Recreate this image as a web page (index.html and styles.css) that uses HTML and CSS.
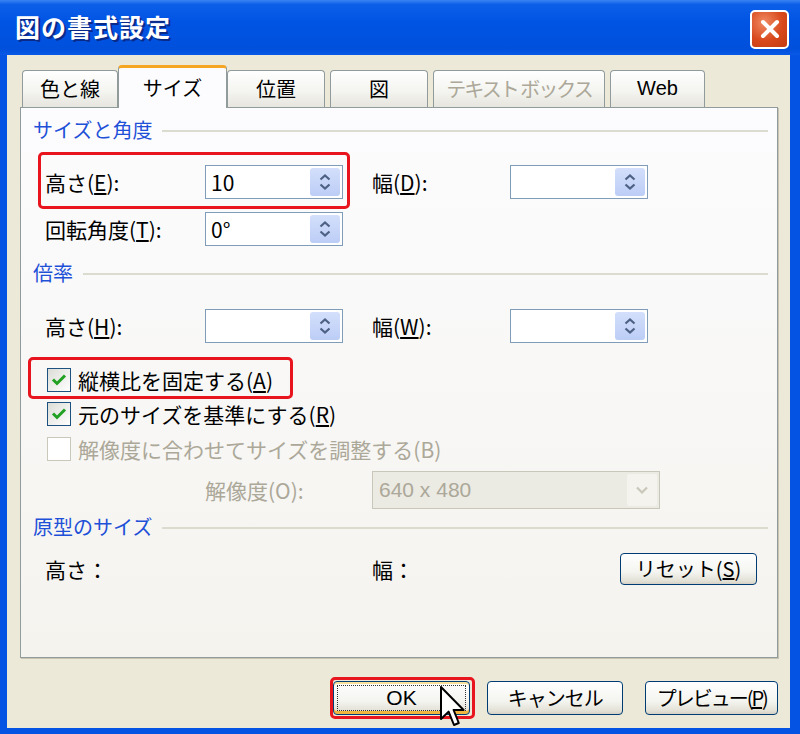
FILE: index.html
```html
<!DOCTYPE html>
<html lang="ja">
<head>
    <meta charset="UTF-8">
    <title>図の書式設定</title>
    <link rel="stylesheet" href="styles.css">
</head>
<body>
    <div class="window">
        <div class="titlebar">
            <span class="title">図の書式設定</span>
            <span class="close">
                <svg width="24" height="24" viewBox="0 0 24 24"><path d="M5 5 L19 19 M19 5 L5 19" stroke="#fff" stroke-width="4" stroke-linecap="round"/></svg>
            </span>
        </div>
        <div class="client">
            <div class="tabs">
                <div class="tab t1">色と線</div>
                <div class="tab t2 selected">サイズ</div>
                <div class="tab t3">位置</div>
                <div class="tab t4">図</div>
                <div class="tab t5 disabled">テキスト ボックス</div>
                <div class="tab t6">Web</div>
            </div>
            <div class="panel">
                <div class="grp first">サイズと角度</div>
                <div class="row r1">
                    <span class="mark mark-row"></span>
                    <span class="lbl">高さ(<u>E</u>):</span>
                    <div class="spin"><span class="val">10</span><span class="arrows"><svg width="16" height="22" viewBox="0 0 16 22"><path d="M3.5 8.5 L8 4.5 L12.5 8.5 M3.5 13.5 L8 17.5 L12.5 13.5" fill="none" stroke="#4d6185" stroke-width="2.2"/></svg></span></div>
                    <span class="lbl2">幅(<u>D</u>):</span>
                    <div class="spin"><span class="val"></span><span class="arrows"><svg width="16" height="22" viewBox="0 0 16 22"><path d="M3.5 8.5 L8 4.5 L12.5 8.5 M3.5 13.5 L8 17.5 L12.5 13.5" fill="none" stroke="#4d6185" stroke-width="2.2"/></svg></span></div>
                </div>
                <div class="row r2">
                    <span class="lbl">回転角度(<u>T</u>):</span>
                    <div class="spin"><span class="val">0°</span><span class="arrows"><svg width="16" height="22" viewBox="0 0 16 22"><path d="M3.5 8.5 L8 4.5 L12.5 8.5 M3.5 13.5 L8 17.5 L12.5 13.5" fill="none" stroke="#4d6185" stroke-width="2.2"/></svg></span></div>
                </div>

                <div class="grp second">倍率</div>
                <div class="row r3">
                    <span class="lbl">高さ(<u>H</u>):</span>
                    <div class="spin"><span class="val"></span><span class="arrows"><svg width="16" height="22" viewBox="0 0 16 22"><path d="M3.5 8.5 L8 4.5 L12.5 8.5 M3.5 13.5 L8 17.5 L12.5 13.5" fill="none" stroke="#4d6185" stroke-width="2.2"/></svg></span></div>
                    <span class="lbl2">幅(<u>W</u>):</span>
                    <div class="spin"><span class="val"></span><span class="arrows"><svg width="16" height="22" viewBox="0 0 16 22"><path d="M3.5 8.5 L8 4.5 L12.5 8.5 M3.5 13.5 L8 17.5 L12.5 13.5" fill="none" stroke="#4d6185" stroke-width="2.2"/></svg></span></div>
                </div>
                <div class="check c1">
                    <span class="mark mark-check"></span>
                    <span class="box"><svg width="22" height="22" viewBox="0 0 22 22"><path d="M5 10.5 L9 14.5 L17 6.5" fill="none" stroke="#21a121" stroke-width="3"/></svg></span>
                    <span>縦横比を固定する(<u>A</u>)</span>
                </div>
                <div class="check c2">
                    <span class="box"><svg width="22" height="22" viewBox="0 0 22 22"><path d="M5 10.5 L9 14.5 L17 6.5" fill="none" stroke="#21a121" stroke-width="3"/></svg></span>
                    <span>元のサイズを基準にする(<u>R</u>)</span>
                </div>
                <div class="check c3 disabled">
                    <span class="box"></span>
                    <span>解像度に合わせてサイズを調整する(B)</span>
                </div>
                <div class="row r4 disabled">
                    <span class="lbl3">解像度(O):</span>
                    <div class="combo"><span>640 x 480</span><span class="drop"><svg width="16" height="12" viewBox="0 0 16 12"><path d="M3 3.5 L8 8.5 L13 3.5" fill="none" stroke="#c9c7ba" stroke-width="2.2"/></svg></span></div>
                </div>

                <div class="grp third">原型のサイズ</div>
                <div class="row r5">
                    <span class="lbl4">高さ：</span>
                    <span class="lbl5">幅：</span>
                    <button class="btn reset">リセット(<u>S</u>)</button>
                </div>
            </div>
            <div class="buttons">
                <div class="okwrap">
                    <span class="mark mark-ok"></span>
                    <button class="btn ok"><span class="focus">OK</span></button>
                    <svg class="cursor" width="26" height="42" viewBox="0 0 13 21"><path d="M0.5 0.5 L0.5 16.5 L4.3 12.8 L7 19.5 L9.4 18.5 L6.8 12 L11.8 12 Z" fill="#fff" stroke="#000" stroke-width="1" stroke-linejoin="round"/></svg>
                </div>
                <button class="btn cancel">キャンセル</button>
                <button class="btn preview">プレビュー(<u>P</u>)</button>
            </div>
        </div>
    </div>
</body>
</html>
```

FILE: styles.css
```css
html, body {
    margin: 0;
    padding: 0;
}
body {
    font-family: "Noto Sans CJK JP", "Noto Sans", sans-serif;
    font-size: 21px;
    color: #000;
    background-color: #0054e3;
}
.window {
    width: 800px;
    height: 734px;
    box-sizing: border-box;
    background-color: #0553e2;
    padding: 0 10px 6px 7px;
    display: flex;
    flex-direction: column;
}
.titlebar {
    height: 55px;
    flex: none;
    margin: 0 -10px 0 -7px;
    padding: 0 11px 0 15px;
    display: flex;
    align-items: center;
    justify-content: space-between;
    background: linear-gradient(#3b83f3 0, #0c5fe8 8%, #0054e3 40%, #0050dc 88%, #0958e6 100%);
}
.title {
    color: #fff;
    font-size: 25px;
    font-weight: bold;
    letter-spacing: 1px;
    text-shadow: 2px 2px 0 #0a2a8a;
    margin-top: -3px;
}
.close {
    width: 39px;
    height: 39px;
    box-sizing: border-box;
    border: 2px solid #fff;
    border-radius: 5px;
    background: radial-gradient(circle at 35% 30%, #f08a62, #d8481c 55%, #c33a12);
    display: flex;
    align-items: center;
    justify-content: center;
    margin-top: 3px;
}
.client {
    flex: 1;
    background-color: #ece9d8;
    padding: 10px 12px 0 13px;
    display: flex;
    flex-direction: column;
}
/* tabs */
.tabs {
    height: 42px;
    display: flex;
    align-items: flex-end;
    padding-left: 2px;
    position: relative;
    z-index: 2;
}
.tab {
    height: 37px;
    box-sizing: border-box;
    border: 1px solid #919b9c;
    border-bottom: none;
    border-radius: 4px 4px 0 0;
    background: linear-gradient(#ffffff, #f3f3ef 60%, #e6e5de);
    text-align: center;
    font-size: 20px;
    line-height: 35px;
    white-space: nowrap;
}
.t1 { width: 96px; }
.t2 { width: 109px; }
.t3 { width: 98px; }
.t4 { width: 98px; margin-left: 5px; }
.t5 { width: 172px; margin-left: 5px; letter-spacing: -2px; }
.t6 { width: 95px; margin-left: 5px; font-family: "Liberation Sans", sans-serif; }
.tab.selected {
    height: 43px;
    margin-bottom: -1px;
    border-top: 3px solid #f5a623;
    background: #fcfcfe;
    line-height: 40px;
}
.tab.disabled {
    color: #aca899;
}
/* panel */
.panel {
    height: 551px;
    box-sizing: border-box;
    border: 1px solid #919b9c;
    box-shadow: 1px 1px 0 #c7c5b2;
    background: linear-gradient(#fcfcfe, #f4f3ee);
    flex: none;
}
.grp {
    height: 24px;
    line-height: 24px;
    padding-left: 12px;
    color: #1e50d8;
    font-size: 20px;
    display: flex;
    align-items: center;
}
.grp::after {
    content: "";
    flex: 1;
    height: 2px;
    background-color: #dcdbd0;
    margin: 2px 9px 0 10px;
}
.grp.first { margin-top: 10px; }
.grp.second { margin-top: 15px; }
.grp.third { margin-top: 6px; }
.row {
    display: flex;
    align-items: center;
    height: 34px;
    padding-left: 24px;
    position: relative;
}
.r1 { margin-top: 23px; }
.r2 { margin-top: 13px; }
.r3 { margin-top: 24px; }
.r4 { margin-top: 10px; height: 38px; }
.r5 { margin-top: 14px; height: 32px; }
.lbl { width: 160px; }
.lbl2 { width: 138px; margin-left: 29px; }
.lbl3 { width: 167px; margin-left: 160px; }
.lbl4 { width: 327px; }
.lbl5 { width: 248px; }
.disabled { color: #aca899; }
/* spinner */
.spin {
    width: 138px;
    height: 34px;
    box-sizing: border-box;
    border: 1px solid #7f9db9;
    background-color: #fff;
    padding: 2px;
    display: flex;
    align-items: center;
    justify-content: space-between;
}
.val {
    padding-left: 3px;
}
.arrows {
    width: 30px;
    height: 100%;
    border-radius: 3px;
    background: linear-gradient(#d3dffb, #bccdf6);
    display: flex;
    align-items: center;
    justify-content: center;
}
/* checkboxes */
.check {
    display: flex;
    align-items: center;
    height: 24px;
    padding-left: 26px;
    position: relative;
}
.c1 { margin-top: 25px; }
.c2 { margin-top: 10px; }
.c3 { margin-top: 11px; }
.box {
    width: 24px;
    height: 24px;
    box-sizing: border-box;
    border: 1px solid #1c5180;
    background: linear-gradient(135deg, #dcdcd7, #fff);
    margin-right: 7px;
    display: flex;
    align-items: center;
    justify-content: center;
}
.check.disabled .box {
    border-color: #cac8bb;
    background: #fff;
}
/* combo */
.combo {
    width: 288px;
    height: 38px;
    box-sizing: border-box;
    border: 1px solid #c9c7ba;
    background-color: #ebeae3;
    padding: 2px 2px 2px 6px;
    display: flex;
    align-items: center;
    justify-content: space-between;
    font-family: "Liberation Sans", sans-serif;
}
.drop {
    width: 30px;
    height: 100%;
    border-radius: 2px;
    background-color: #f4f3ee;
    display: flex;
    align-items: center;
    justify-content: center;
}
/* buttons */
.btn {
    font-family: "Noto Sans CJK JP", "Noto Sans", sans-serif;
    font-size: 20px;
    color: #000;
    height: 34px;
    box-sizing: border-box;
    border: 1px solid #003c74;
    border-radius: 4px;
    background: linear-gradient(#ffffff, #f4f4f0 60%, #e3e1d6 90%, #d6d0c5);
    padding: 0;
    line-height: 30px;
    white-space: nowrap;
}
.reset {
    width: 137px;
    height: 32px;
}
.buttons {
    margin-top: 23px;
    padding-left: 313px;
    display: flex;
    align-items: center;
}
.okwrap {
    position: relative;
    margin-right: 17px;
}
.ok {
    width: 137px;
    display: block;
    padding: 3px;
    box-shadow: inset 0 -3px 0 #f1b43f, inset 0 2px 0 #fbe29a;
    font-family: "Liberation Sans", sans-serif;
    font-size: 21px;
}
.ok .focus {
    display: block;
    height: 24px;
    line-height: 24px;
    border: 1px dotted #333;
}
.cancel {
    width: 138px;
    margin-right: 22px;
    letter-spacing: -1px;
}
.preview {
    width: 134px;
    letter-spacing: -2px;
}
/* annotation marks */
.mark {
    position: absolute;
    box-sizing: border-box;
    border: 3px solid #e8141e;
    border-radius: 5px;
    z-index: 3;
    pointer-events: none;
}
.mark-row {
    left: 17px;
    top: -13px;
    width: 312px;
    height: 57px;
}
.mark-check {
    left: 7px;
    top: -11px;
    width: 265px;
    height: 42px;
}
.mark-ok {
    left: -3px;
    top: -4px;
    width: 145px;
    height: 42px;
}
.cursor {
    position: absolute;
    left: 107px;
    top: 5px;
    z-index: 4;
}
```
